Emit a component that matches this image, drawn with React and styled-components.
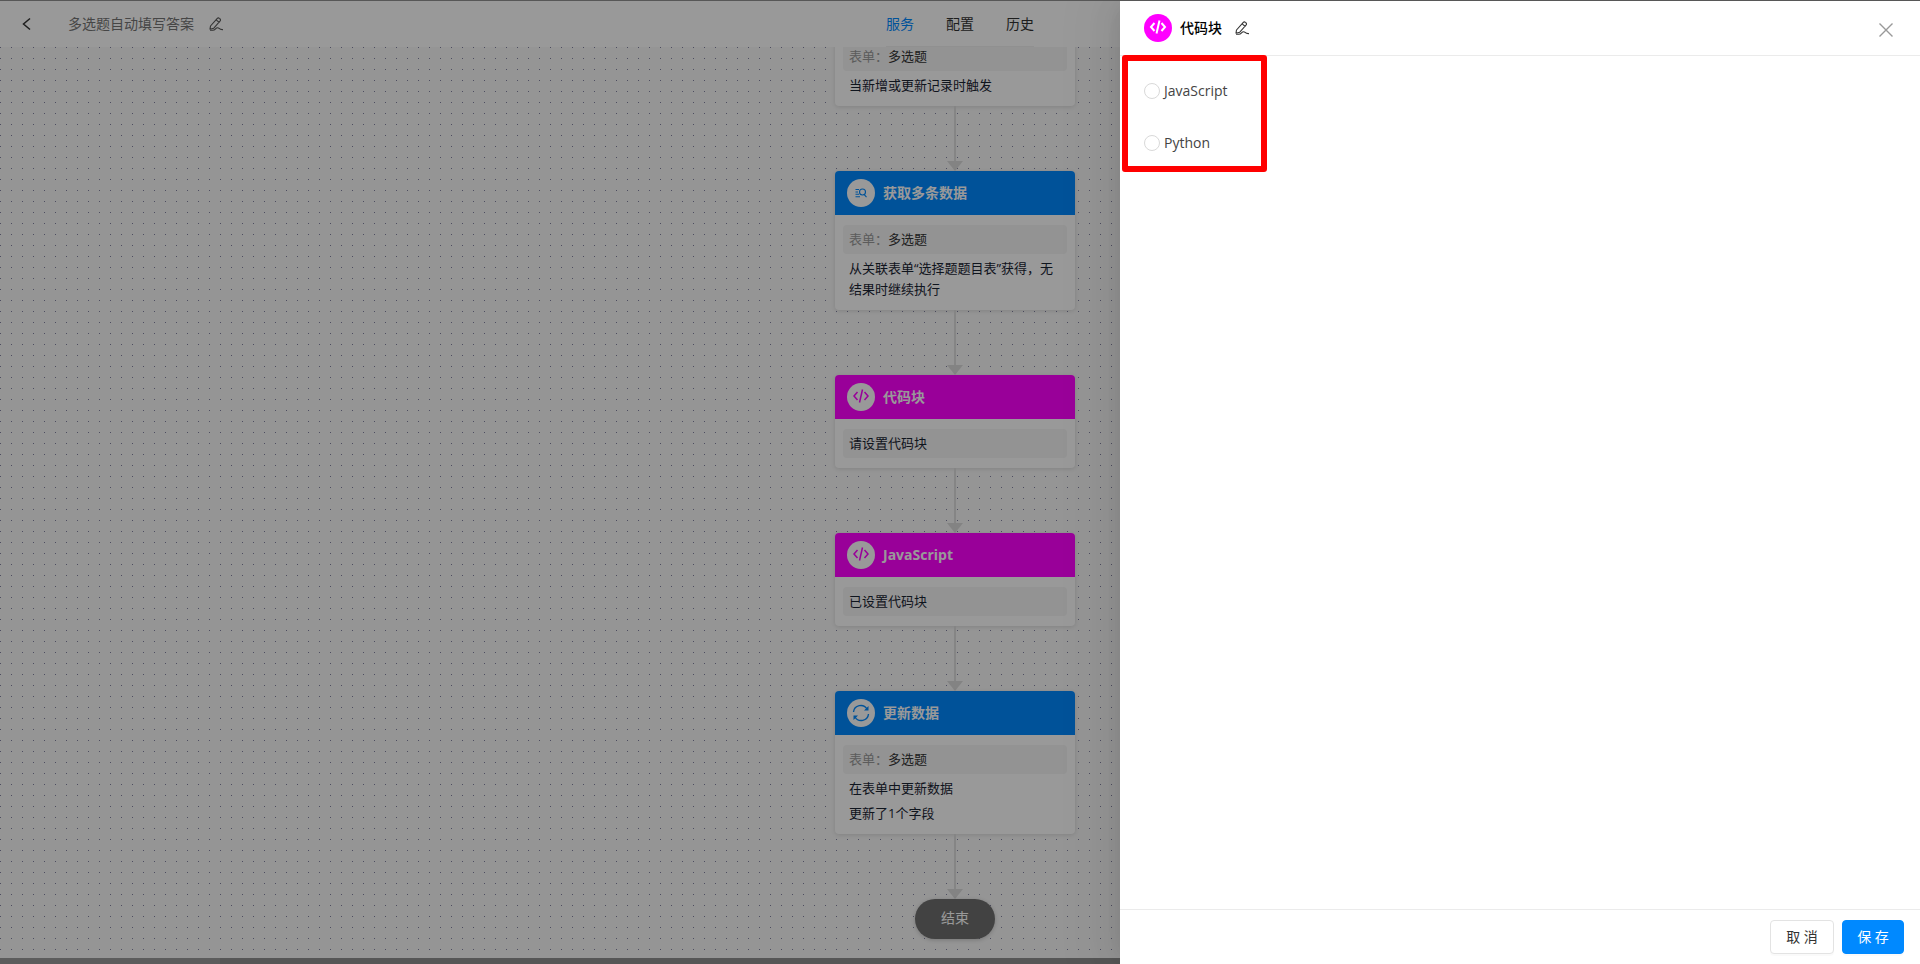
import React, { useState } from 'react'
import styled, { createGlobalStyle } from 'styled-components';

const GlobalStyle = createGlobalStyle`
  *{box-sizing:border-box;}
  body{
    margin:0;
    font-family:"Open Sans","Noto Sans CJK SC",sans-serif;
    font-size:14px;
    line-height:20px;
    color:#333;
  }
  button,input{font-family:inherit;font-size:inherit;}
`
const Screen = styled.div`
  position:relative;
  height:100vh;
  overflow:hidden;
  border-top:1px solid #575757;
  background:#fff;
`
const Page = styled.div`
  display:flex;
  flex-direction:column;
  height:100%;
`
const TopBar = styled.header`
  flex:none;
  display:grid;
  grid-template-columns:1fr auto 1fr;
  height:46px;
  background:#fff;
`
const TopLeft = styled.div`
  display:flex;
  align-items:center;
  padding-left:20px;
`
const IconButton = styled.button`
  display:flex;
  padding:0;
  border:0;
  background:none;
  color:${p => p.$color || '#333'};
  cursor:pointer;
`
const FlowName = styled.h1`
  margin:0 15px 0 34px;
  font-size:14px;
  font-weight:400;
  color:#757575;
`
const Tabs = styled.nav`
  display:flex;
  align-items:center;
  gap:32px;
  border-bottom:1px solid #f0f0f0;
`
const Tab = styled.a`
  color:${p => p.$active ? '#0089ff' : '#333'};
  text-decoration:none;
`
const Canvas = styled.main`
  flex:1;
  min-height:0;
  overflow:hidden;
  display:flex;
  flex-direction:column;
  align-items:center;
  justify-content:flex-end;
  padding:0 10px 19px 0;
  background-color:#f8f8f8;
  background-image:conic-gradient(from 270deg at 1px 1px,#8080a0 90deg,transparent 0);
  background-size:11px 11px;
`
const ScrollBar = styled.div`
  flex:none;
  height:6px;
  background:#909090;
`
const ScrollThumb = styled.div`
  width:220px;
  height:6px;
  background:#999;
`
const Node = styled.section`
  flex:none;
  width:240px;
  border-radius:4px;
  background:#fff;
  box-shadow:0 1px 4px rgba(0,0,0,.12);
`
const NodeHead = styled.div`
  display:flex;
  align-items:center;
  gap:8px;
  height:44px;
  padding:0 12px;
  border-radius:4px 4px 0 0;
  background:${p => p.$color};
  color:#fff;
`
const NodeTitle = styled.h2`
  margin:0;
  font-size:14px;
  font-weight:700;
`
const Badge = styled.span`
  flex:none;
  display:flex;
  align-items:center;
  justify-content:center;
  width:28px;
  height:28px;
  border-radius:50%;
  background:${p => p.$bg || '#fff'};
  color:${p => p.$color};
`
const NodeBody = styled.div`
  padding:10px 8px;
  font-size:13px;
  line-height:21px;
  color:#1a2433;
`
const Field = styled.div`
  padding:4px 6px;
  border-radius:4px;
  background:#f5f5f5;
  height:29px;
`
const FieldLabel = styled.span`
  color:#999;
`
const FieldValue = styled.span`
  color:#333;
`
const Line = styled.p`
  margin:4px 0 0;
  padding:0 6px;
`
const Connector = styled.div`
  flex:none;
  display:flex;
  flex-direction:column;
  align-items:center;
  height:65px;
  &::before{
    content:'';
    flex:1;
    width:2px;
    background:#dedede;
  }
  &::after{
    content:'';
    border:8px solid transparent;
    border-top:10px solid #dadada;
    border-bottom:0;
  }
`
const EndNode = styled.div`
  flex:none;
  width:80px;
  height:40px;
  border-radius:20px;
  background:#6f6f6f;
  color:#fff;
  line-height:38px;
  text-align:center;
  box-shadow:0 1px 4px rgba(0,0,0,.2);
`
const Mask = styled.div`
  position:absolute;
  inset:0;
  background:rgba(0,0,0,.4);
`
const Drawer = styled.aside`
  position:absolute;
  top:0;
  right:0;
  bottom:0;
  display:flex;
  flex-direction:column;
  width:800px;
  max-width:100%;
  background:#fff;
  box-shadow:-6px 0 16px -8px rgba(0,0,0,.08),-9px 0 28px 0 rgba(0,0,0,.05),-12px 0 48px 16px rgba(0,0,0,.03);
`
const DrawerHead = styled.div`
  flex:none;
  display:flex;
  align-items:center;
  gap:8px;
  height:55px;
  padding:0 24px;
  border-bottom:1px solid #ebebeb;
`
const DrawerTitle = styled.h2`
  margin:0 5px 0 0;
  font-size:14px;
  font-weight:500;
  color:#000;
`
const CloseButton = styled(IconButton)`
  margin:4px 3px 0 auto;
`
const DrawerBody = styled.div`
  flex:1;
`
const Languages = styled.fieldset`
  display:flex;
  flex-direction:column;
  gap:32px;
  width:145px;
  margin:-1px 0 0 2px;
  padding:20px 16px 13px;
  border:6px solid #f00;
  border-radius:3px;
`
const RadioLabel = styled.label`
  display:flex;
  align-items:center;
  gap:4px;
  color:#444;
  cursor:pointer;
`
const Radio = styled.input`
  appearance:none;
  flex:none;
  width:16px;
  height:16px;
  margin:0;
  border:1px solid #d9d9d9;
  border-radius:50%;
  background:#fff;
  &:checked{border:5px solid #0089ff;}
`
const DrawerFoot = styled.div`
  flex:none;
  display:flex;
  align-items:center;
  justify-content:flex-end;
  gap:8px;
  height:55px;
  padding:0 16px;
  border-top:1px solid #ebebeb;
`
const Button = styled.button`
  min-width:${p => p.$primary ? '62px' : '64px'};
  height:34px;
  padding:0 12px 2px;
  border:1px solid ${p => p.$primary ? '#0089ff' : '#e3e3e3'};
  border-radius:4px;
  background:${p => p.$primary ? '#0089ff' : '#fff'};
  color:${p => p.$primary ? '#fff' : '#333'};
  box-shadow:0 2px 0 rgba(0,0,0,.02);
  cursor:pointer;
`

const BackIcon = () => (
  <svg width="14" height="14" viewBox="0 0 14 14" fill="none" stroke="currentColor" strokeWidth="1.5">
    <path d="M10 1.5 3.5 7l6.5 5.5" />
  </svg>
)
const EditIcon = () => (
  <svg width="14" height="14" viewBox="0 0 14 14" fill="none" stroke="currentColor" strokeWidth="1.1" strokeLinejoin="round" strokeLinecap="round">
    <path d="M1.5 9 8.300 1.300a1.400 1.400 0 0 1 2 0l.8.700a1.400 1.400 0 0 1 0 2L4.800 11.200 1 12.200zM7.200 2.800l2.900 2.500" />
    <path d="M1.500 13.300h2.300C6.500 13.300 6.500 10.700 8.500 10.700s1.300 2 5 1.900" />
  </svg>
)
const CloseIcon = () => (
  <svg width="14" height="14" viewBox="0 0 14 14" fill="none" stroke="currentColor" strokeWidth="1.4">
    <path d="m.5.5 13 13M13.5.5l-13 13" />
  </svg>
)
const CodeIcon = ({ bold }) => (
  <svg width="18" height="18" viewBox="0 0 18 18" fill="none" stroke="currentColor" strokeWidth={bold ? 2 : 1.5}>
    <path d="M5.500 4 2 8l3.500 4M12.500 4 16 8l-3.500 4M10.500 1.500l-3 13" />
  </svg>
)
const QueryIcon = () => (
  <svg width="12" height="10" viewBox="0 0 12 10" fill="none" stroke="currentColor" strokeWidth="1.1">
    <path d="M.5 1.500h3.500M.5 4h2.500M.5 6.300h3.500M.5 8.700h4.500M9.300 6.700l2.200 2.500" />
    <circle cx="7.500" cy="4" r="3" />
  </svg>
)
const RefreshIcon = () => (
  <svg width="18" height="18" viewBox="0 0 18 18" fill="none" stroke="currentColor" strokeWidth="1.4">
    <path d="M1.500 8A7.300 7.300 0 0 1 15 5M16.500 10A7.300 7.300 0 0 1 3 13" />
    <path d="M16.500 2v4.500H12zM1.500 16v-4.500H6z" fill="currentColor" stroke="none" />
  </svg>
)

const nodes = [
  { form: '多选题', lines: ['当新增或更新记录时触发'] },
  { title: '获取多条数据', color: '#0089ff', icon: <QueryIcon />, form: '多选题', lines: ['从关联表单“选择题题目表”获得，无结果时继续执行'] },
  { title: '代码块', color: '#f0f', icon: <CodeIcon />, text: '请设置代码块', lines: [] },
  { title: 'JavaScript', color: '#f0f', icon: <CodeIcon />, text: '已设置代码块', lines: [] },
  { title: '更新数据', color: '#0089ff', icon: <RefreshIcon />, form: '多选题', lines: ['在表单中更新数据', '更新了1个字段'] },
]

const FlowNode = ({ node }) => (
  <>
    <Node>
      {node.title && (
        <NodeHead $color={node.color}>
          <Badge $color={node.color}>{node.icon}</Badge>
          <NodeTitle>{node.title}</NodeTitle>
        </NodeHead>
      )}
      <NodeBody>
        <Field>
          {node.form ? <><FieldLabel>表单：</FieldLabel><FieldValue>{node.form}</FieldValue></> : node.text}
        </Field>
        {node.lines.map(line => <Line key={line}>{line}</Line>)}
      </NodeBody>
    </Node>
    <Connector />
  </>
)

const App = () => {
  const [language, setLanguage] = useState('')

  return (
    <Screen>
      <GlobalStyle />
      <Page>
        <TopBar>
          <TopLeft>
            <IconButton aria-label="返回"><BackIcon /></IconButton>
            <FlowName>多选题自动填写答案</FlowName>
            <IconButton aria-label="编辑名称" $color="#555"><EditIcon /></IconButton>
          </TopLeft>
          <Tabs>
            <Tab href="#service" $active>服务</Tab>
            <Tab href="#config">配置</Tab>
            <Tab href="#history">历史</Tab>
          </Tabs>
        </TopBar>
        <Canvas>
          {nodes.map((node, i) => <FlowNode key={i} node={node} />)}
          <EndNode>结束</EndNode>
        </Canvas>
        <ScrollBar><ScrollThumb /></ScrollBar>
      </Page>
      <Mask />
      <Drawer>
        <DrawerHead>
          <Badge $bg="#f0f" $color="#fff"><CodeIcon bold /></Badge>
          <DrawerTitle>代码块</DrawerTitle>
          <IconButton aria-label="编辑"><EditIcon /></IconButton>
          <CloseButton aria-label="关闭" $color="#999"><CloseIcon /></CloseButton>
        </DrawerHead>
        <DrawerBody>
          <Languages>
            {['JavaScript', 'Python'].map(name => (
              <RadioLabel key={name}>
                <Radio type="radio" name="language" checked={language === name} onChange={() => setLanguage(name)} />
                {name}
              </RadioLabel>
            ))}
          </Languages>
        </DrawerBody>
        <DrawerFoot>
          <Button type="button">取 消</Button>
          <Button type="button" $primary>保 存</Button>
        </DrawerFoot>
      </Drawer>
    </Screen>
  )
}

export default App
